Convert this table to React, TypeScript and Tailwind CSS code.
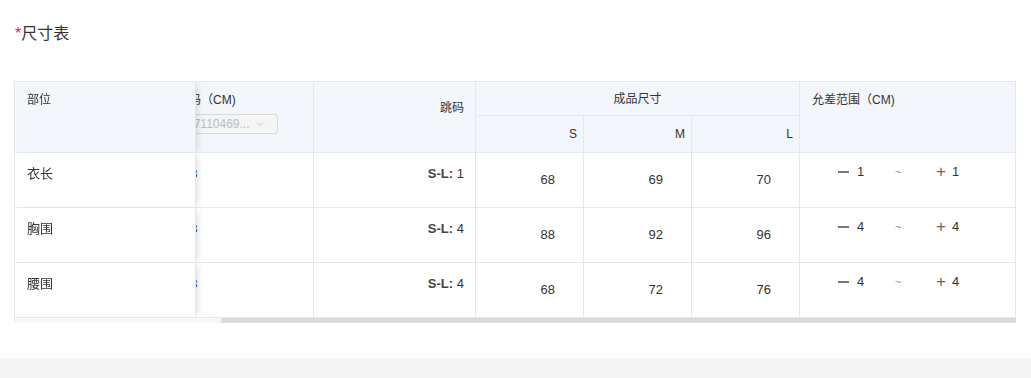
import React, { useLayoutEffect, useRef, useState } from "react";

interface SizeRow {
  part: string;
  base: string;
  step: string;
  s: number;
  m: number;
  l: number;
  tol: number;
}

const rows: SizeRow[] = [
  { part: "衣长", base: "38", step: "1", s: 68, m: 69, l: 70, tol: 1 },
  { part: "胸围", base: "38", step: "4", s: 88, m: 92, l: 96, tol: 4 },
  { part: "腰围", base: "38", step: "4", s: 68, m: 72, l: 76, tol: 4 },
];

const th = "border-b border-r border-[#e4e7ed] bg-[#f3f6fa] text-[12px] font-normal text-[#333]";
const td = "border-b border-r border-[#e4e7ed] bg-white text-[13px] text-[#333]";
const sticky = "sticky left-0 z-10 shadow-[5px_0_6px_-3px_rgba(0,0,0,0.12)]";

const SizeTable: React.FC = () => {
  const scrollRef = useRef<HTMLDivElement>(null);
  const [thumb, setThumb] = useState({ left: 0, width: 100 });

  useLayoutEffect(() => {
    const el = scrollRef.current;
    if (!el) return;
    el.scrollLeft = el.scrollWidth;
    const ratio = el.clientWidth / el.scrollWidth;
    setThumb({
      left: (el.scrollLeft / el.scrollWidth) * 100,
      width: ratio * 100,
    });
  }, []);

  return (
    <div className="border-l border-t border-[#e4e7ed]">
      <div ref={scrollRef} className="overflow-x-hidden">
        <table className="w-[1261px] table-fixed border-separate border-spacing-0 text-left">
          <colgroup>
            <col className="w-[181px]" />
            <col className="w-[229px]" />
            <col className="w-[149px]" />
            <col className="w-[162px]" />
            <col className="w-[108px]" />
            <col className="w-[108px]" />
            <col className="w-[108px]" />
            <col className="w-[216px]" />
          </colgroup>
          <thead>
            <tr className="h-[34px]">
              <th rowSpan={2} className={`${th} ${sticky} px-3 pt-[9px] align-top`}>
                部位
              </th>
              <th rowSpan={2} className={th} />
              <th rowSpan={2} className={`${th} px-3 pt-[9px] align-top`}>
                <div>尺码（CM)</div>
                <div className="mt-[5px] flex h-[20px] w-[101px] items-center justify-between rounded-[3px] border border-[#d9d9d9] bg-[#f5f5f5] pl-[9px] pr-[12px] text-[#bbb]">
                  <span>27110469...</span>
                  <svg width="10" height="10" viewBox="0 0 10 10" fill="none">
                    <path d="M2 3.5 5 6.5 8 3.5" stroke="#c0c0c0" strokeWidth="1" />
                  </svg>
                </div>
              </th>
              <th rowSpan={2} className={`${th} pr-[11px] pt-[17px] text-right align-top`}>
                跳码
              </th>
              <th colSpan={3} className={`${th} text-center align-middle`}>
                成品尺寸
              </th>
              <th rowSpan={2} className={`${th} px-3 pt-[9px] align-top`}>
                允差范围（CM)
              </th>
            </tr>
            <tr className="h-[37px]">
              {["S", "M", "L"].map((s) => (
                <th key={s} className={`${th} pr-[6px] text-right align-middle`}>
                  {s}
                </th>
              ))}
            </tr>
          </thead>
          <tbody>
            {rows.map((r) => (
              <tr key={r.part} className="h-[55px]">
                <td className={`${td} ${sticky} px-3 pt-[11px] align-top`}>{r.part}</td>
                <td className={td} />
                <td className={`${td} pl-[18px] pt-[11px] align-top`}>{r.base}</td>
                <td className={`${td} pr-[11px] pt-[11px] text-right align-top`}>
                  <b className="font-bold text-[#444]">S-L:</b> {r.step}
                </td>
                {[r.s, r.m, r.l].map((v, i) => (
                  <td key={i} className={`${td} pr-[28px] text-right align-middle`}>
                    {v}
                  </td>
                ))}
                <td className={`${td} pl-[38px] pt-[9px] align-top`}>
                  <div className="flex items-center">
                    <span className="flex w-[57px] items-center gap-[8px]">
                      <span className="h-[2px] w-[11px] bg-[#777]" />
                      <span>{r.tol}</span>
                    </span>
                    <span className="w-[41px] text-[11px] text-[#888]">~</span>
                    <span className="flex items-center gap-[6px]">
                      <span className="text-[17px] leading-none text-[#666]">+</span>
                      <span>{r.tol}</span>
                    </span>
                  </div>
                </td>
              </tr>
            ))}
          </tbody>
        </table>
      </div>
      <div className="relative h-[5px] bg-[#f7f7f7]">
        <div
          className="absolute top-0 h-[5px] bg-[#dcdcdc]"
          style={{ left: `${thumb.left}%`, width: `${thumb.width}%` }}
        />
      </div>
    </div>
  );
};

export default function App() {
  return (
    <div className="w-[1031px] bg-white font-['Liberation_Sans','Noto_Sans_CJK_SC',sans-serif]">
      <div className="px-[14px] pb-[35px] pt-[22px]">
        <h2 className="pl-px text-[16px] font-normal leading-6 text-[#333]">
          <span className="text-[#f5222d]">*</span>尺寸表
        </h2>
        <div className="mt-[35px] w-[1002px]">
          <SizeTable />
        </div>
      </div>
      <div className="h-5 bg-[#f5f5f5]" />
    </div>
  );
}
